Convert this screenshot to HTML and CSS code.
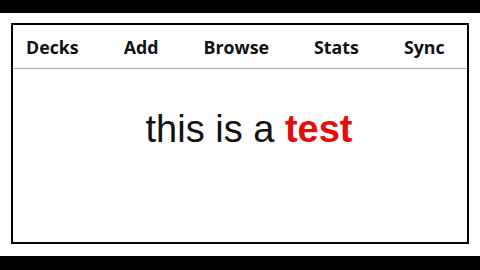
FILE: index.html
```html
<!DOCTYPE html>
<html>
<head>
<meta charset="utf-8">
<link rel="stylesheet" href="styles.css">
</head>
<body>
<div class="frame">
  <div class="panel">
    <nav class="nav">
      <span class="nav-item">Decks</span>
      <span class="nav-item">Add</span>
      <span class="nav-item">Browse</span>
      <span class="nav-item">Stats</span>
      <span class="nav-item">Sync</span>
    </nav>
    <main class="content">
      <p class="message">this is a <b class="hl">test</b></p>
    </main>
  </div>
</div>
</body>
</html>
```
FILE: styles.css
```css
html, body {
  margin: 0;
  padding: 0;
  background: #000;
  width: 480px;
  height: 270px;
  overflow: hidden;
}
.frame {
  margin-top: 13px;
  height: 243px;
  background: #fff;
  padding: 10px 11px 0 11px;
  box-sizing: border-box;
}
.panel {
  border: 2px solid #000;
  height: 221px;
  box-sizing: border-box;
  background: #fff;
}
.nav {
  display: flex;
  gap: 45px;
  padding: 10px 0 9px 13px;
  border-bottom: 1px solid #a9a9a9;
  font-family: "Open Sans", "DejaVu Sans", sans-serif;
  font-weight: 700;
  font-size: 17.8px;
  line-height: 24px;
  color: #111;
}
.content {
  padding: 39px 0 0 18px;
  text-align: center;
}
.message {
  margin: 0;
  font-family: "Liberation Sans", Arial, sans-serif;
  font-size: 38px;
  color: #111;
}
.hl {
  color: #e50c0c;
  font-weight: 700;
}
```
